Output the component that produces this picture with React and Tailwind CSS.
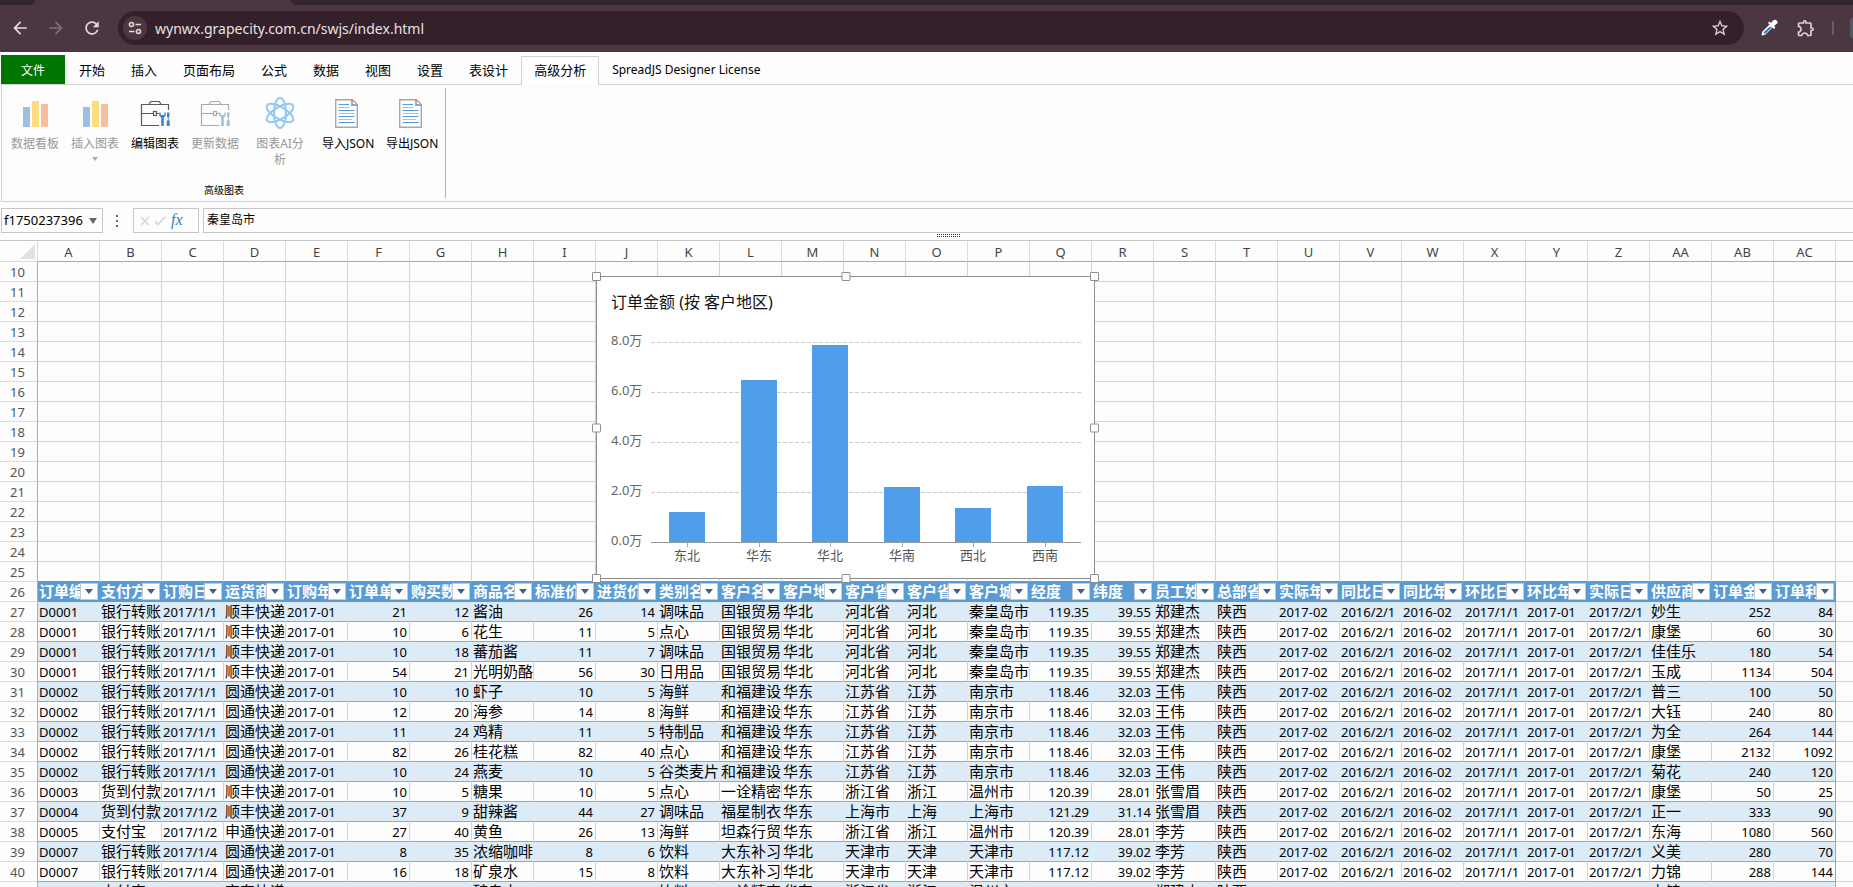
import { useState } from "react";
import { MdArrowBack, MdArrowForward, MdRefresh, MdStarBorder, MdOutlineExtension } from "react-icons/md";

const tabs = ["开始", "插入", "页面布局", "公式", "数据", "视图", "设置", "表设计", "高级分析", "SpreadJS Designer License"];

const letters = [
  "A", "B", "C", "D", "E", "F", "G", "H", "I", "J", "K", "L", "M", "N", "O",
  "P", "Q", "R", "S", "T", "U", "V", "W", "X", "Y", "Z", "AA", "AB", "AC",
];

const headers = [
  "订单编", "支付方", "订购日", "运货商", "订购年", "订单单", "购买数", "商品名", "标准价", "进货价",
  "类别名", "客户名", "客户地", "客户省", "客户省", "客户城", "经度", "纬度", "员工姓", "总部省",
  "实际年", "同比日", "同比年", "环比日", "环比年", "实际日", "供应商", "订单金", "订单利",
];

// Columns shown right aligned
const numeric = [5, 6, 8, 9, 16, 17, 27, 28];

const hebei = ["国银贸易", "华北", "河北省", "河北", "秦皇岛市", "119.35", "39.55", "郑建杰"];
const jiangsu = ["和福建设", "华东", "江苏省", "江苏", "南京市", "118.46", "32.03", "王伟"];
const tianjin = ["大东补习", "华北", "天津市", "天津", "天津市", "117.12", "39.02", "李芳"];
const fixed = ["陕西", "2017-02", "2016/2/1", "2016-02", "2017/1/1", "2017-01", "2017/2/1"];

const orders = [
  ["D0001", "银行转账", "2017/1/1", "顺丰快递", "2017-01", "21", "12", "酱油", "26", "14", "调味品", ...hebei, ...fixed, "妙生", "252", "84"],
  ["D0001", "银行转账", "2017/1/1", "顺丰快递", "2017-01", "10", "6", "花生", "11", "5", "点心", ...hebei, ...fixed, "康堡", "60", "30"],
  ["D0001", "银行转账", "2017/1/1", "顺丰快递", "2017-01", "10", "18", "蕃茄酱", "11", "7", "调味品", ...hebei, ...fixed, "佳佳乐", "180", "54"],
  ["D0001", "银行转账", "2017/1/1", "顺丰快递", "2017-01", "54", "21", "光明奶酪", "56", "30", "日用品", ...hebei, ...fixed, "玉成", "1134", "504"],
  ["D0002", "银行转账", "2017/1/1", "圆通快递", "2017-01", "10", "10", "虾子", "10", "5", "海鲜", ...jiangsu, ...fixed, "普三", "100", "50"],
  ["D0002", "银行转账", "2017/1/1", "圆通快递", "2017-01", "12", "20", "海参", "14", "8", "海鲜", ...jiangsu, ...fixed, "大钰", "240", "80"],
  ["D0002", "银行转账", "2017/1/1", "圆通快递", "2017-01", "11", "24", "鸡精", "11", "5", "特制品", ...jiangsu, ...fixed, "为全", "264", "144"],
  ["D0002", "银行转账", "2017/1/1", "圆通快递", "2017-01", "82", "26", "桂花糕", "82", "40", "点心", ...jiangsu, ...fixed, "康堡", "2132", "1092"],
  ["D0002", "银行转账", "2017/1/1", "圆通快递", "2017-01", "10", "24", "燕麦", "10", "5", "谷类麦片", ...jiangsu, ...fixed, "菊花", "240", "120"],
  ["D0003", "货到付款", "2017/1/1", "顺丰快递", "2017-01", "10", "5", "糖果", "10", "5", "点心", "一诠精密", "华东", "浙江省", "浙江", "温州市", "120.39", "28.01", "张雪眉", ...fixed, "康堡", "50", "25"],
  ["D0004", "货到付款", "2017/1/2", "顺丰快递", "2017-01", "37", "9", "甜辣酱", "44", "27", "调味品", "福星制衣", "华东", "上海市", "上海", "上海市", "121.29", "31.14", "张雪眉", ...fixed, "正一", "333", "90"],
  ["D0005", "支付宝", "2017/1/2", "申通快递", "2017-01", "27", "40", "黄鱼", "26", "13", "海鲜", "坦森行贸", "华东", "浙江省", "浙江", "温州市", "120.39", "28.01", "李芳", ...fixed, "东海", "1080", "560"],
  ["D0007", "银行转账", "2017/1/4", "圆通快递", "2017-01", "8", "35", "浓缩咖啡", "8", "6", "饮料", ...tianjin, ...fixed, "义美", "280", "70"],
  ["D0007", "银行转账", "2017/1/4", "圆通快递", "2017-01", "16", "18", "矿泉水", "15", "8", "饮料", ...tianjin, ...fixed, "力锦", "288", "144"],
  ["D0008", "支付宝", "2017/1/5", "京东快递", "2017-01", "16", "20", "矿泉水", "15", "8", "饮料", "一诠精密", "华东", "浙江省", "浙江", "温州市", "120.39", "28.01", "郑建杰", ...fixed, "力锦", "320", "160"],
];

const bars = [
  { name: "东北", top: 236 },
  { name: "华东", top: 104 },
  { name: "华北", top: 69 },
  { name: "华南", top: 211 },
  { name: "西北", top: 232 },
  { name: "西南", top: 210 },
];

const ticks = ["8.0万", "6.0万", "4.0万", "2.0万", "0.0万"];

const handles = [
  "-left-[5px] -top-[5px]",
  "left-1/2 -top-[5px] -translate-x-1/2",
  "-right-[5px] -top-[5px]",
  "-left-[5px] top-1/2 -translate-y-1/2",
  "-right-[5px] top-1/2 -translate-y-1/2",
  "-left-[5px] -bottom-[5px]",
  "left-1/2 -bottom-[5px] -translate-x-1/2",
  "-right-[5px] -bottom-[5px]",
];

function BarsIcon() {
  return (
    <svg width="32" height="32" viewBox="0 0 32 32">
      <rect x="4" y="10" width="7" height="20" fill="#9dbfe4" />
      <rect x="13" y="4" width="7" height="26" fill="#ffdb7f" />
      <rect x="22" y="7" width="7" height="23" fill="#f7bd9d" />
    </svg>
  );
}

function ToolboxIcon({ faded }) {
  return (
    <svg width="32" height="32" viewBox="0 0 32 32" opacity={faded ? 0.5 : 1}>
      <g fill="none" stroke="#5a5a5a" strokeWidth="1.2">
        <path d="M20 28.500H2.500V7.500H29.500V13" />
        <path d="M10.500 7.500V6.200L12 4.500H20L21.500 6.200V7.500" />
        <path d="M3 16.500H14.500M18 16.500H20" />
        <rect x="14.500" y="14.500" width="3" height="4" />
      </g>
      <path d="M20.200 15.500v3l2 2.200V29h2.600v-8.300l2-2.200v-3h-1.400v2.500h-3.600v-2.500z" fill="#3f86ca" />
      <path d="M28 15.500h2.500V20h-.8v3.500h1V29h-3v-5.500h1V20H28z" fill="#3f86ca" />
    </svg>
  );
}

function AtomIcon() {
  return (
    <svg width="32" height="32" viewBox="0 0 32 32" fill="none" stroke="#8fc9f2" strokeWidth="2">
      <ellipse cx="16" cy="16" rx="6" ry="15" />
      <ellipse cx="16" cy="16" rx="6" ry="15" transform="rotate(60 16 16)" />
      <ellipse cx="16" cy="16" rx="6" ry="15" transform="rotate(-60 16 16)" />
    </svg>
  );
}

function DocIcon() {
  return (
    <svg width="32" height="32" viewBox="0 0 32 32" fill="none">
      <path d="M4.700 2.700H21.500L26.300 7.500V30.300H4.700z" stroke="#a8a8a8" strokeWidth="1.400" />
      <path d="M21 3V8H26" stroke="#8a8a8a" strokeWidth="1.400" />
      <path d="M7.500 7.500H18M7.500 13.500H23.500M7.500 19.500H23.500M7.500 25.500H23.500" stroke="#5b9bd5" />
      <path d="M7.500 10.500H18M7.500 16.500H23.500M7.500 22.500H21" stroke="#9dc3ea" />
    </svg>
  );
}

function PickerIcon() {
  return (
    <svg width="18" height="18" viewBox="0 0 18 18">
      <path d="M10.500 4.500 2.500 12.500Q1 16.500 2 16.500T5.500 15.500L13.500 7.500z" fill="#fff" />
      <path d="M9.500 8 12 8 5.500 14.500 3.500 14.500 4.500 12.500z" fill="#1f6fd0" />
      <path d="M8 4 9.500 2.500 11 4 13 1.500Q15.500 0 17 2T16.500 5L14 7 15.500 8.500 14 10z" fill="#fff" />
    </svg>
  );
}

function BrowserBar() {
  return (
    <div className="bg-[#4b3741]">
      <div className="flex h-[5px]">
        <div className="w-[35px] rounded-br-md bg-[#33252d]"></div>
        <div className="w-[256px]"></div>
        <div className="flex-1 rounded-bl-md bg-[#33252d]"></div>
      </div>
      <div className="flex h-[47px] items-center pb-px text-[#ddd0d0]">
        <div className="flex w-[118px] items-center gap-4 pl-[10px]">
          <button aria-label="Back"><MdArrowBack size={20} className="block text-[#e4dbd8]" /></button>
          <button aria-label="Forward"><MdArrowForward size={20} className="block text-[#7d7073]" /></button>
          <button aria-label="Reload"><MdRefresh size={20} className="block text-[#e4dbd8]" /></button>
        </div>
        <div className="flex h-[34px] flex-1 items-center rounded-full bg-[#34202a] pr-[14px] pl-[5px]">
          <button aria-label="Site information" className="flex h-6 w-6 items-center justify-center rounded-full bg-[#4b3741]">
            <svg width="14" height="14" viewBox="0 0 14 14" fill="none" stroke="#e4dbd8" strokeWidth="1.600">
              <circle cx="3.500" cy="3.500" r="2" />
              <path d="M7.500 3.500H13M1 10.500H6.500" />
              <circle cx="10.500" cy="10.500" r="2" />
            </svg>
          </button>
          <input
            aria-label="Address"
            className="ml-2 flex-1 bg-transparent text-[14px] text-[#e8e0e0] outline-none"
            defaultValue="wynwx.grapecity.com.cn/swjs/index.html"
          />
          <button aria-label="Bookmark"><MdStarBorder size={20} className="block" /></button>
        </div>
        <div className="flex w-[109px] items-center pl-4">
          <button aria-label="Color picker"><PickerIcon /></button>
          <button aria-label="Extensions" className="ml-[18px]"><MdOutlineExtension size={20} className="block" /></button>
          <div className="ml-4 h-[14px] w-[2px] bg-[#6b5c61]"></div>
          <div className="ml-4 h-5 w-[3px] rounded-l-full bg-[#4d5a61]"></div>
        </div>
      </div>
    </div>
  );
}

function RibbonButton({ icon, label, disabled, className, arrow }) {
  return (
    <button
      disabled={disabled}
      className={`flex flex-col items-center text-[12px] leading-4 ${disabled ? "text-[#999]" : "text-black"} ${className}`}
    >
      {icon}
      <span className="mt-[7px] max-w-[50px] [overflow-wrap:anywhere]">{label}</span>
      {arrow && <span className="mt-[5px] border-x-[3px] border-t-4 border-x-transparent border-t-[#aaa]"></span>}
    </button>
  );
}

function Ribbon() {
  const [active, setActive] = useState("高级分析");

  return (
    <div className="pt-[3px] pl-px">
      <div className="flex h-[29px] text-[13px]">
        <button className="w-16 bg-[#007500] pt-[2px] text-[12px] text-white">文件</button>
        <div className="flex pl-px">
          {tabs.map((tab) => (
            <button
              key={tab}
              onClick={() => setActive(tab)}
              className={
                tab === active
                  ? "relative z-10 mt-px h-[29px] border border-b-0 border-[#d2d2d2] bg-white px-3"
                  : tab.startsWith("Spread")
                    ? "px-[13px] pt-px text-[12px]"
                    : "px-[13px] pt-[2px]"
              }
            >
              {tab}
            </button>
          ))}
        </div>
      </div>
      <div className="flex h-[118px] border border-r-0 border-[#d2d2d2] bg-[#fdfdfd] pt-[3px]">
        <div className="flex h-[110px] flex-col justify-between border-r border-[#abb4bd] pr-[2px] pl-[3px]">
          <div className="flex items-start pt-[9px]">
            <RibbonButton className="w-[60px]" icon={<BarsIcon />} label="数据看板" disabled />
            <RibbonButton className="w-[60px]" icon={<BarsIcon />} label="插入图表" disabled arrow />
            <RibbonButton className="w-[60px]" icon={<ToolboxIcon />} label="编辑图表" />
            <RibbonButton className="w-[60px]" icon={<ToolboxIcon faded />} label="更新数据" disabled />
            <RibbonButton className="w-[70px]" icon={<AtomIcon />} label="图表AI分析" disabled />
            <RibbonButton className="w-16 whitespace-nowrap" icon={<DocIcon />} label="导入JSON" />
            <RibbonButton className="w-16 whitespace-nowrap" icon={<DocIcon />} label="导出JSON" />
          </div>
          <div className="text-center text-[10px] leading-4">高级图表</div>
        </div>
      </div>
    </div>
  );
}

function FormulaBar() {
  return (
    <div className="mt-[6px] flex h-[25px] pl-px">
      <div className="flex w-[102px] items-center border border-[#c6c6c6]">
        <input aria-label="Name box" className="w-[84px] pt-px pl-[2px] text-[13px] outline-none" defaultValue="f1750237396" />
        <button aria-label="Open name list" className="ml-[3px] border-x-[4px] border-t-[6px] border-x-transparent border-t-[#666]"></button>
      </div>
      <div className="flex w-[30px] flex-col items-center justify-center gap-[3px] pr-[3px]">
        <span className="h-[2px] w-[2px] bg-[#666]"></span>
        <span className="h-[2px] w-[2px] bg-[#666]"></span>
        <span className="h-[2px] w-[2px] bg-[#666]"></span>
      </div>
      <div className="flex w-[66px] items-center gap-1 border border-[#c6c6c6] pl-[6px]">
        <button aria-label="Cancel">
          <svg width="10" height="10" viewBox="0 0 10 10" stroke="#d6d6d6" strokeWidth="1.500"><path d="M1 1 9 9M9 1 1 9" /></svg>
        </button>
        <button aria-label="Enter">
          <svg width="12" height="10" viewBox="0 0 12 10" fill="none" stroke="#d6d6d6" strokeWidth="1.800"><path d="M1 5.500 4 8.500 11 1" /></svg>
        </button>
        <button aria-label="Insert function" className="pb-px pl-px font-['Liberation_Serif',serif] text-base leading-none text-[#3a7cbc] italic">fx</button>
      </div>
      <input
        aria-label="Formula"
        className="ml-1 flex-1 border border-r-0 border-[#c6c6c6] pb-[2px] pl-[3px] text-[12px] outline-none"
        defaultValue="秦皇岛市"
      />
    </div>
  );
}

function Chart() {
  return (
    <div className="absolute top-[35px] left-[596px] h-[303px] w-[499px] border border-[#8e8e8e] bg-white">
      <svg width="497" height="301" viewBox="0 0 497 301">
        <text x="14" y="31" fontSize="16" fill="#111">订单金额 (按 客户地区)</text>
        {ticks.map((t, i) => (
          <g key={t}>
            <text x="14" y={68 + i * 50} fontSize="13" fill="#666">{t}</text>
            <line
              x1="54" x2="484" y1={65.5 + i * 50} y2={65.5 + i * 50}
              stroke={i === 4 ? "#999" : "#ccc"}
              strokeDasharray={i === 4 ? "none" : "4 2"}
            />
          </g>
        ))}
        {bars.map((bar, i) => (
          <g key={bar.name}>
            <rect x={72 + Math.round(i * 71.6)} y={bar.top - 1} width="36" height={266 - bar.top} fill="#509eea" />
            <line x1={90.5 + Math.round(i * 71.6)} x2={90.5 + Math.round(i * 71.6)} y1="266" y2="270" stroke="#aaa" />
            <text x={90 + Math.round(i * 71.6)} y="283" fontSize="13" fill="#555" textAnchor="middle">{bar.name}</text>
          </g>
        ))}
      </svg>
      {handles.map((pos) => (
        <span key={pos} className={`absolute h-[9px] w-[9px] rounded-[1px] border border-[#8e8e8e] bg-white ${pos}`}></span>
      ))}
    </div>
  );
}

function RowHeader({ n }) {
  return (
    <th scope="row" className="h-5 border-r border-b border-r-[#ababab] border-b-[#dcdcdc] pt-[2px] pr-[2px] pb-0 pl-0 text-center text-[13px] leading-[17px] font-normal text-[#555]">
      {n}
    </th>
  );
}

function Sheet() {
  return (
    <div className="relative min-h-0 flex-1 overflow-hidden border-t border-[#c6c6c6]">
      <table className="w-full min-w-[1853px] table-fixed border-separate border-spacing-0">
        <colgroup>
          <col className="w-[38px]" />
          {letters.map((l) => <col key={l} className="w-[62px]" />)}
          <col />
        </colgroup>
        <thead>
          <tr>
            <td className="h-[21px] border-r border-b border-r-[#dcdcdc] border-b-[#dcdcdc] p-0">
              <svg width="37" height="18" viewBox="0 0 37 18" className="block"><path d="M35 2V17H20z" fill="#dfe2e0" /></svg>
            </td>
            {letters.map((l) => (
              <th key={l} className="h-[21px] border-r border-b border-r-[#dcdcdc] border-b-[#ababab] px-0 pt-[2px] pb-0 text-[13px] leading-[18px] font-normal text-[#444]">{l}</th>
            ))}
            <td className="h-[21px] border-b border-[#ababab] p-0"></td>
          </tr>
        </thead>
        <tbody>
          {Array.from({ length: 16 }, (_, r) => (
            <tr key={r}>
              <RowHeader n={r + 10} />
              {letters.map((l) => (
                <td key={l} className={`border-r border-b border-r-[#d4d4d4] p-0 ${r === 15 ? "border-b-[#5b9bd5]" : "border-b-[#d4d4d4]"}`}></td>
              ))}
              <td className="border-b border-[#d4d4d4] p-0"></td>
            </tr>
          ))}
          <tr>
            <RowHeader n={26} />
            {headers.map((h, i) => (
              <th key={i} scope="col" className="border-b border-[#5b9bd5] bg-[#5b9bd5] p-0 text-left text-[15px] leading-[19px] font-bold text-white">
                <div className="flex h-[19px] items-center pr-[2px] pl-px">
                  <span className="w-0 flex-1 whitespace-nowrap">{h}</span>
                  <button aria-label={`Filter ${h}`} className="relative flex h-[17px] w-[18px] items-center justify-center border border-[#c9c9c9] bg-white">
                    <span className="border-x-[4px] border-t-[5px] border-x-transparent border-t-[#3b5f8f]"></span>
                  </button>
                </div>
              </th>
            ))}
            <td className="border-b border-[#d4d4d4] p-0"></td>
          </tr>
          {orders.map((row, r) => (
            <tr key={r} className="text-black">
              <RowHeader n={r + 27} />
              {row.map((value, c) => (
                <td
                  key={c}
                  className={`h-5 border-r border-b border-b-[#7bafdc] pb-0 whitespace-nowrap ${
                    r % 2 === 0 ? "bg-[#ddebf7]" : ""
                  } ${c === 28 ? "border-r-[#7bafdc]" : r % 2 === 0 ? "border-r-[#ddebf7]" : "border-r-[#d4d4d4]"} ${
                    numeric.includes(c) ? "pr-[2px] pl-0 text-right" : "pr-0 pl-px"
                  } ${/^[\w./-]+$/.test(value) ? "pt-[2px] text-[13px] leading-[17px]" : "pt-0 text-[15px] leading-[19px]"}`}
                >
                  {value}
                </td>
              ))}
              <td className="border-b border-[#d4d4d4] p-0"></td>
            </tr>
          ))}
        </tbody>
      </table>
      <Chart />
    </div>
  );
}

export default function App() {
  return (
    <div className="flex h-screen flex-col overflow-hidden bg-[#fdfdfd] font-['Noto_Sans','Noto_Sans_CJK_SC',sans-serif]">
      <BrowserBar />
      <Ribbon />
      <FormulaBar />
      <div className="flex h-[7px] items-center justify-center pb-[2px] pl-[44px]">
        <div className="grid grid-cols-12 gap-px">
          {Array.from({ length: 24 }, (_, i) => (
            <span key={i} className="h-px w-px bg-[#333]"></span>
          ))}
        </div>
      </div>
      <Sheet />
    </div>
  );
}
